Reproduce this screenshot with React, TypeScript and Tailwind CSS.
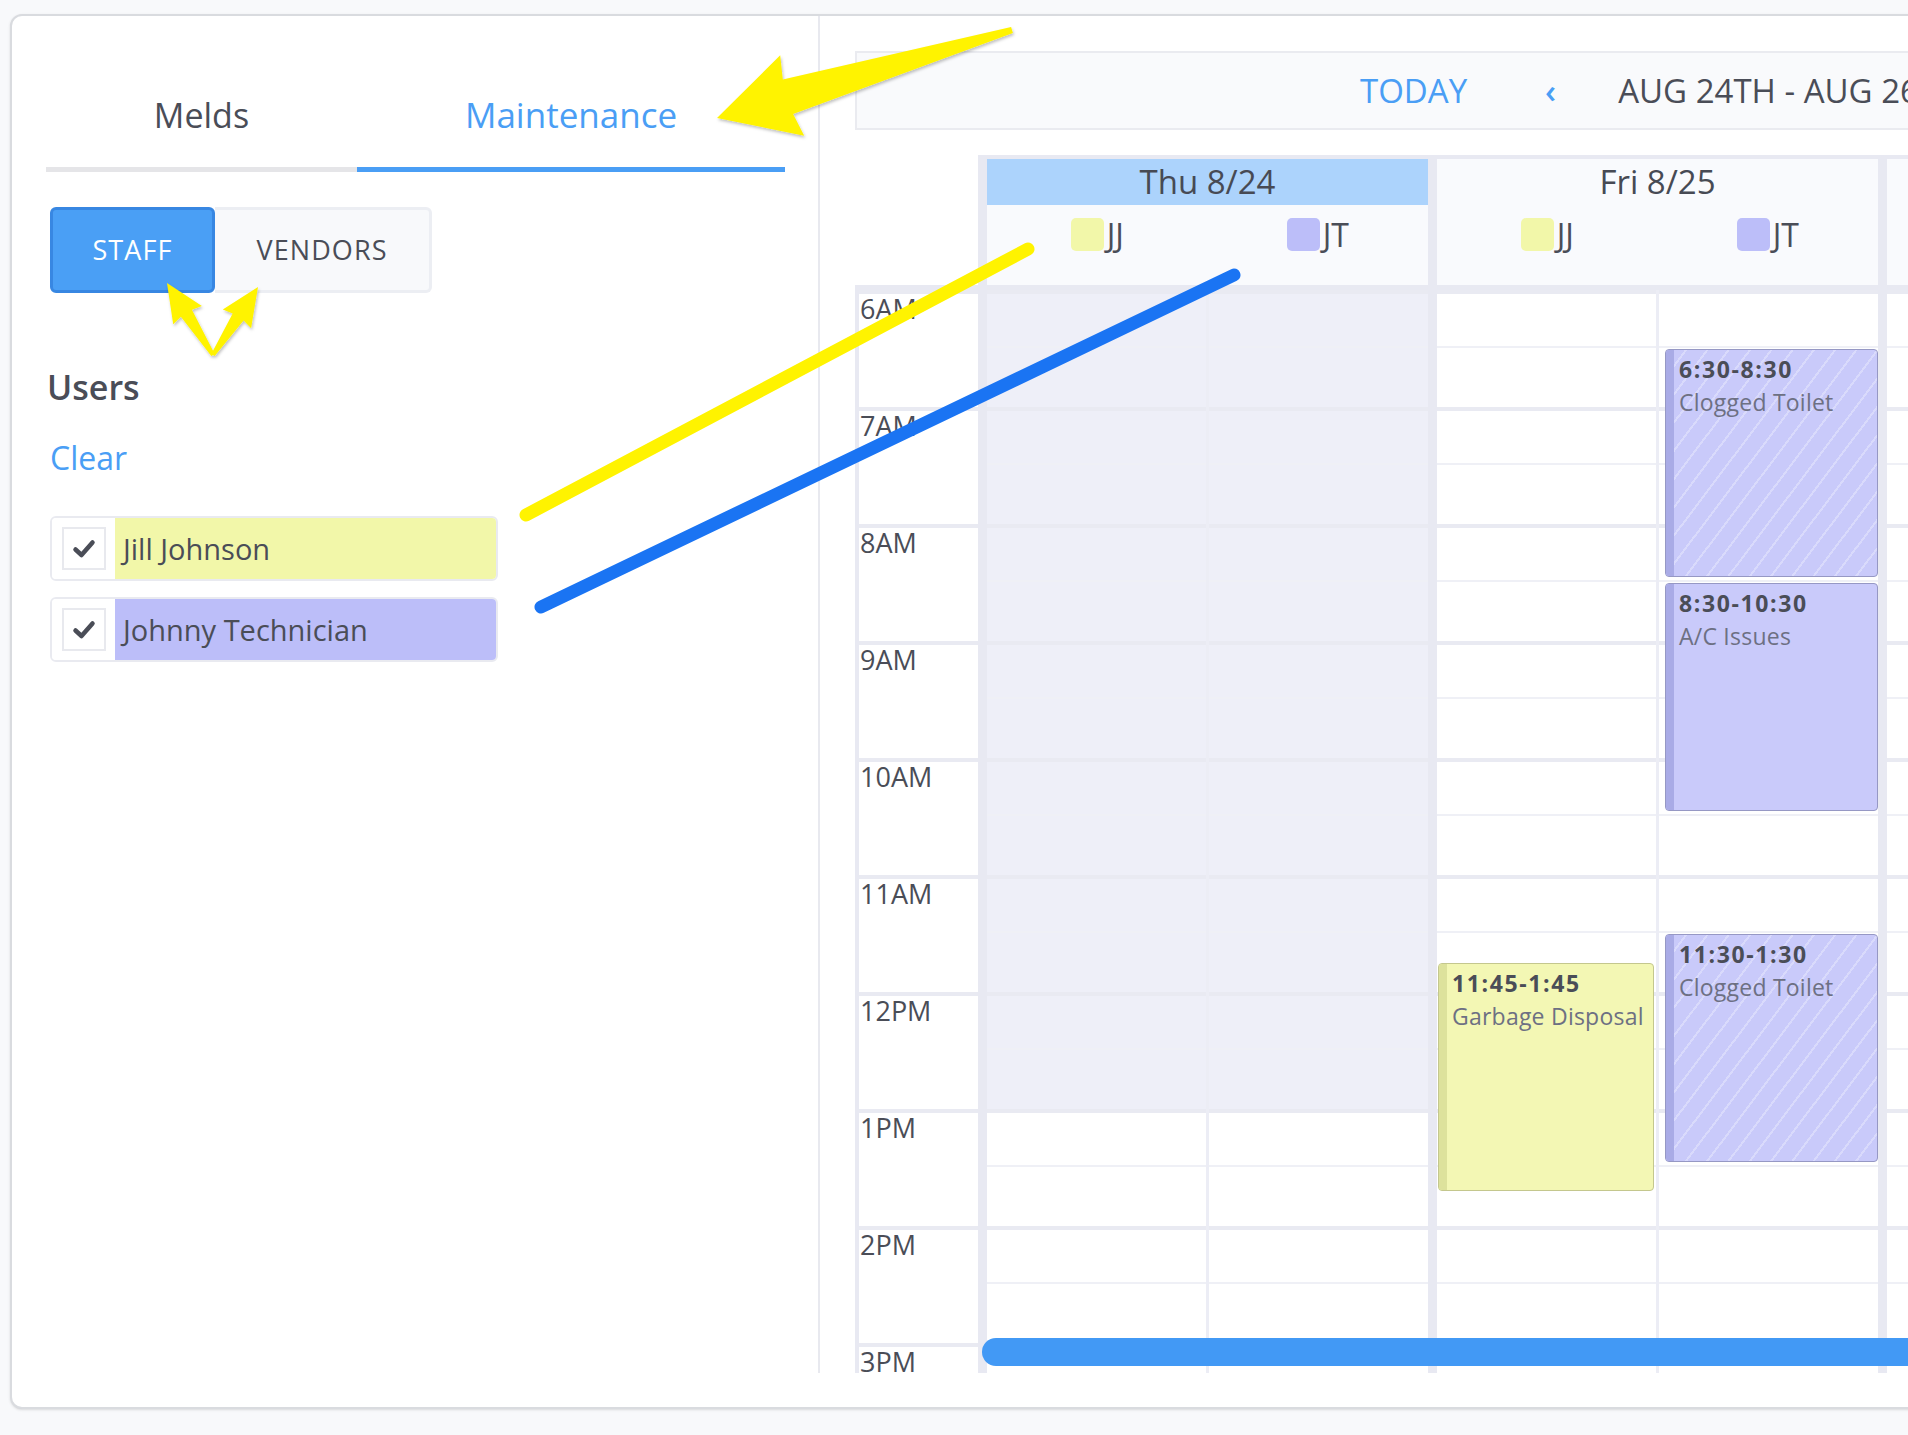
import React from "react";

type Tone = "jj" | "jt";

type CalEvent = {
  start: number;
  end: number;
  time: string;
  title: string;
  tone: Tone;
  hatch?: boolean;
  inset: string;
};

const HOUR = 117;
const hours = ["6AM", "7AM", "8AM", "9AM", "10AM", "11AM", "12PM", "1PM", "2PM", "3PM"];

const friJJ: CalEvent[] = [
  { start: 11.75, end: 13.75, time: "11:45-1:45", title: "Garbage Disposal", tone: "jj", inset: "left-[1px] right-[2px]" },
];

const friJT: CalEvent[] = [
  { start: 6.5, end: 8.5, time: "6:30-8:30", title: "Clogged Toilet", tone: "jt", hatch: true, inset: "left-[6px] right-0" },
  { start: 8.5, end: 10.5, time: "8:30-10:30", title: "A/C Issues", tone: "jt", inset: "left-[6px] right-0" },
  { start: 11.5, end: 13.5, time: "11:30-1:30", title: "Clogged Toilet", tone: "jt", hatch: true, inset: "left-[6px] right-0" },
];

function arrowPoints(
  tail: [number, number],
  tip: [number, number],
  tailW: number,
  neckW: number,
  headW: number,
  headL: number
) {
  const [x1, y1] = tail;
  const [x2, y2] = tip;
  const len = Math.hypot(x2 - x1, y2 - y1);
  const ux = (x2 - x1) / len;
  const uy = (y2 - y1) / len;
  const nx = -uy;
  const ny = ux;
  const neck = [x2 - ux * headL, y2 - uy * headL];
  const barb = [x2 - ux * headL * 1.06, y2 - uy * headL * 1.06];
  const pts = [
    [x1 + (nx * tailW) / 2, y1 + (ny * tailW) / 2],
    [neck[0] + (nx * neckW) / 2, neck[1] + (ny * neckW) / 2],
    [barb[0] + (nx * headW) / 2, barb[1] + (ny * headW) / 2],
    [x2, y2],
    [barb[0] - (nx * headW) / 2, barb[1] - (ny * headW) / 2],
    [neck[0] - (nx * neckW) / 2, neck[1] - (ny * neckW) / 2],
    [x1 - (nx * tailW) / 2, y1 - (ny * tailW) / 2],
  ];
  return pts.map((p) => `${p[0].toFixed(1)},${p[1].toFixed(1)}`).join(" ");
}

const CheckMark = () => (
  <svg width="24" height="20" viewBox="0 0 24 20">
    <path
      d="M3.5 10.5 L9.5 16 L20.5 3.5"
      fill="none"
      stroke="#4a4d57"
      strokeWidth="4.5"
      strokeLinecap="round"
      strokeLinejoin="round"
    />
  </svg>
);

const UserRow = ({ name, tone }: { name: string; tone: Tone }) => (
  <div className="flex h-[65px] w-[448px] overflow-hidden rounded-[6px] border-2 border-[#e9eaf0]">
    <div className="flex w-[63px] shrink-0 items-center justify-center bg-white">
      <div className="flex h-[43px] w-[44px] items-center justify-center border-2 border-[#e8e9ee]">
        <CheckMark />
      </div>
    </div>
    <div
      className={`flex flex-1 items-center pl-[8px] text-[29px] text-[#4a4d57] ${
        tone === "jj" ? "bg-[#f2f7a9]" : "bg-[#bcbef9]"
      }`}
    >
      {name}
    </div>
  </div>
);

const Swatch = ({ tone, label }: { tone: Tone; label: string }) => (
  <div className="flex flex-1 justify-center gap-[3px] pt-[13px]">
    <div
      className={`h-[33px] w-[33px] rounded-[5px] ${tone === "jj" ? "bg-[#f2f7a9]" : "bg-[#bcbef9]"}`}
    />
    <span className="text-[32px] leading-[33px] text-[#4a4d57]">{label}</span>
  </div>
);

const DayHeader = ({ label, today, blank }: { label: string; today?: boolean; blank?: boolean }) => (
  <div className="w-[441px] shrink-0 bg-[#f9fafd]">
    <div
      className={`flex h-[46px] items-center justify-center text-[33px] text-[#474a54] ${
        today ? "bg-[#acd3fc]" : ""
      }`}
    >
      {!blank && label}
    </div>
    <div className="flex h-[80px]">
      {!blank && (
        <>
          <Swatch tone="jj" label="JJ" />
          <Swatch tone="jt" label="JT" />
        </>
      )}
    </div>
  </div>
);

const EventCard = ({ ev }: { ev: CalEvent }) => {
  const yellow = ev.tone === "jj";
  return (
    <div
      className={`absolute overflow-hidden rounded-[4px] border ${ev.inset} ${
        yellow ? "border-[#c4c78e] bg-[#f3f7b4]" : "border-[#9698c4] bg-[#c9cafa]"
      }`}
      style={{ top: (ev.start - 6) * HOUR, height: (ev.end - ev.start) * HOUR - 6 }}
    >
      {ev.hatch && (
        <div className="absolute inset-0 bg-[repeating-linear-gradient(127deg,transparent_0px,transparent_15px,rgba(255,255,255,0.3)_15px,rgba(255,255,255,0.3)_17px)]" />
      )}
      <div
        className={`absolute inset-y-0 left-0 w-[8px] ${yellow ? "bg-[#dde29c]" : "bg-[#a9abe6]"}`}
      />
      <div className="relative pl-[13px] pt-[3px] text-[23px] leading-[33px]">
        <div className="font-bold tracking-[0.07em] text-[#4a4d57]">{ev.time}</div>
        <div className="whitespace-nowrap tracking-[0.01em] text-[#6d7083]">{ev.title}</div>
      </div>
    </div>
  );
};

const SubColumn = ({ shaded = 0, events = [] }: { shaded?: number; events?: CalEvent[] }) => (
  <div className="relative flex-1">
    {hours.map((h, i) => (
      <div
        key={h}
        className={`h-[117px] border-t-4 border-[#e9eaf2] ${i < shaded ? "bg-[#eeeff8]" : "bg-white"}`}
      >
        <div className="h-[54px] border-b-2 border-[#eff0f6]" />
      </div>
    ))}
    {events.map((ev) => (
      <EventCard key={ev.time} ev={ev} />
    ))}
  </div>
);

const DayColumn = ({ children }: { children: React.ReactNode }) => (
  <div className="flex w-[441px] shrink-0 gap-[3px] bg-[#ecedf5]">{children}</div>
);

export default function App() {
  return (
    <div className="relative h-[1435px] w-[1908px] overflow-hidden bg-[#f8f9fb] pl-[10px] pt-[14px] font-['Open_Sans',sans-serif]">
      <div className="h-[1395px] w-[1980px] rounded-[12px] border-2 border-[#d9dbdf] bg-white pb-[34px] shadow-sm">
        <div className="flex h-full">
          {/* left panel */}
          <div className="w-[808px] shrink-0 border-r-2 border-[#e8e9ef] pl-[38px]">
            <div className="-ml-[4px] mt-[76px] flex">
              <div className="w-[311px] border-b-[5px] border-[#e5e5e8] pb-[29px] text-center text-[34px] leading-[46px] text-[#4a4d57]">
                Melds
              </div>
              <div className="w-[428px] border-b-[5px] border-[#4a9ef5] pb-[29px] text-center text-[35px] leading-[46px] text-[#4a9ef5]">
                Maintenance
              </div>
            </div>

            <div className="mt-[35px] flex">
              <div className="flex h-[86px] w-[165px] items-center justify-center rounded-[6px] border-[3px] border-[#3887e2] bg-[#4a9ff5] text-[27px] tracking-[0.04em] text-white">
                STAFF
              </div>
              <div className="flex h-[86px] w-[217px] items-center justify-center rounded-r-[6px] border-[3px] border-l-0 border-[#eceef3] bg-[#f8f9fb] text-[27px] tracking-[0.04em] text-[#4a4d57]">
                VENDORS
              </div>
            </div>

            <div className="-ml-[3px] mt-[71px] text-[34px] font-semibold leading-[46px] text-[#4a4d57]">Users</div>
            <div className="mt-[26px] text-[32px] leading-[44px] text-[#4a9ef5]">Clear</div>

            <div className="mt-[36px] flex flex-col gap-[16px]">
              <UserRow name="Jill Johnson" tone="jj" />
              <UserRow name="Johnny Technician" tone="jt" />
            </div>
          </div>

          {/* calendar */}
          <div className="flex min-w-0 flex-1 flex-col pl-[35px] pt-[35px]">
            <div className="flex h-[79px] shrink-0 items-center border-2 border-[#eaebf0] bg-[#f9fafc] pl-[503px] text-[33px]">
              <span className="text-[#4a9ef5]">TODAY</span>
              <span className="ml-[78px] font-semibold text-[#4a9ef5]">‹</span>
              <span className="ml-[62px] whitespace-nowrap text-[#4a4d57]">AUG 24TH - AUG 26TH</span>
            </div>

            <div className="mt-[25px] flex shrink-0">
              <div className="w-[123px] shrink-0 bg-white" />
              <div className="flex gap-[9px] bg-[#e8e9f2] pl-[9px] pt-[4px]">
                <DayHeader label="Thu 8/24" today />
                <DayHeader label="Fri 8/25" />
                <DayHeader label="Sat 8/26" blank />
              </div>
            </div>

            <div className="relative flex min-h-0 flex-1 gap-[9px] overflow-hidden bg-[#e8e9f2] pl-[4px] pt-[5px]">
              <div className="w-[119px] shrink-0">
                {hours.map((h) => (
                  <div
                    key={h}
                    className="h-[117px] border-t-4 border-[#e9eaf2] bg-white pl-[1px] pt-[1px] text-[27px] leading-[27px] text-[#4a4d57]"
                  >
                    {h}
                  </div>
                ))}
              </div>
              <DayColumn>
                <SubColumn shaded={7} />
                <SubColumn shaded={7} />
              </DayColumn>
              <DayColumn>
                <SubColumn events={friJJ} />
                <SubColumn events={friJT} />
              </DayColumn>
              <DayColumn>
                <SubColumn />
                <SubColumn />
              </DayColumn>

              {/* horizontal scrollbar */}
              <div className="absolute bottom-[7px] left-[127px] right-[-40px] h-[28px] rounded-full bg-[#4299f5]" />
            </div>
          </div>
        </div>
      </div>

      {/* annotations */}
      <svg className="pointer-events-none absolute inset-0" width="1908" height="1435">
        <defs>
          <filter id="shade" x="-10%" y="-10%" width="120%" height="130%">
            <feDropShadow dx="1" dy="2" stdDeviation="1.5" floodColor="#000" floodOpacity="0.25" />
          </filter>
        </defs>
        <line x1="526" y1="515" x2="1028" y2="249" stroke="#fff300" strokeWidth="13" strokeLinecap="round" />
        <line x1="541" y1="607" x2="1234" y2="275" stroke="#1a74f3" strokeWidth="13" strokeLinecap="round" />
        <g filter="url(#shade)" fill="#fff300">
          <polygon points={arrowPoints([1012, 30], [717, 118], 6, 36, 84, 74)} />
          <polygon points={arrowPoints([213, 355], [167, 283], 4, 13, 34, 36)} />
          <polygon points={arrowPoints([213, 355], [258, 287], 4, 13, 34, 36)} />
        </g>
      </svg>
    </div>
  );
}
